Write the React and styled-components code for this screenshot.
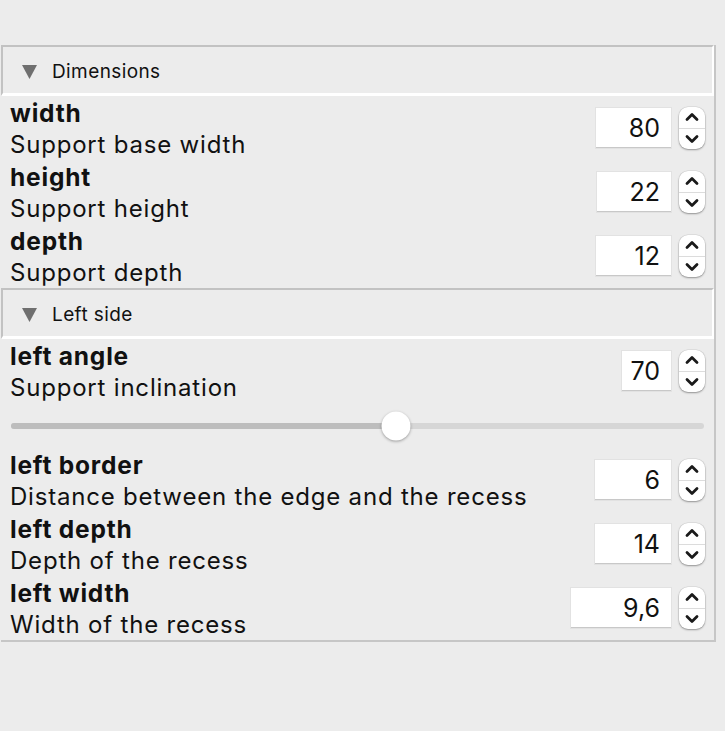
import styled, { createGlobalStyle } from 'styled-components';

const GlobalStyle = createGlobalStyle`
  html, body {
    margin: 0;
    padding: 0;
    background: #ececec;
    font-family: Inter, "Liberation Sans", sans-serif;
    color: #111;
  }
`;

const sections = [
  {
    title: 'Dimensions',
    rows: [
      { name: 'width', desc: 'Support base width', value: '80', boxWidth: 75 },
      { name: 'height', desc: 'Support height', value: '22', boxWidth: 74 },
      { name: 'depth', desc: 'Support depth', value: '12', boxWidth: 75 },
    ],
  },
  {
    title: 'Left side',
    rows: [
      { name: 'left angle', desc: 'Support inclination', value: '70', boxWidth: 49, slider: 0.555 },
      { name: 'left border', desc: 'Distance between the edge and the recess', value: '6', boxWidth: 76 },
      { name: 'left depth', desc: 'Depth of the recess', value: '14', boxWidth: 76 },
      { name: 'left width', desc: 'Width of the recess', value: '9,6', boxWidth: 100 },
    ],
  },
];

const Triangle = () => (
  <TriangleIcon width="15" height="14" viewBox="0 0 15 14">
    <polygon points="0,0 15,0 7.5,14" fill="#6f6f6f" />
  </TriangleIcon>
);

const Stepper = () => (
  <StepperBox>
    <StepHalf>
      <svg width="14" height="10" viewBox="0 0 14 10">
        <polyline points="2,7.5 7,2.5 12,7.5" fill="none" stroke="#1a1a1a" strokeWidth="2.8" strokeLinecap="round" strokeLinejoin="round" />
      </svg>
    </StepHalf>
    <StepHalf $bottom>
      <svg width="14" height="10" viewBox="0 0 14 10">
        <polyline points="2,2.5 7,7.5 12,2.5" fill="none" stroke="#1a1a1a" strokeWidth="2.8" strokeLinecap="round" strokeLinejoin="round" />
      </svg>
    </StepHalf>
  </StepperBox>
);

const App = () => {
  return (
    <>
      <GlobalStyle />
      <Page>
        <Panel>
          {sections.map((s) => (
            <section key={s.title}>
              <Header>
                <Triangle />
                <HeaderTitle>{s.title}</HeaderTitle>
              </Header>
              {s.rows.map((r) => (
                <div key={r.name}>
                  <Row>
                    <Labels>
                      <Name>{r.name}</Name>
                      <Desc>{r.desc}</Desc>
                    </Labels>
                    <Control>
                      <NumberBox $w={r.boxWidth}>{r.value}</NumberBox>
                      <Stepper />
                    </Control>
                  </Row>
                  {r.slider !== undefined && (
                    <SliderRow>
                      <Track>
                        <Fill style={{ width: `${r.slider * 100}%` }} />
                        <Thumb style={{ left: `${r.slider * 100}%` }} />
                      </Track>
                    </SliderRow>
                  )}
                </div>
              ))}
            </section>
          ))}
        </Panel>
      </Page>
    </>
  );
};

export default App;

const Page = styled.div`
  width: 725px;
  height: 731px;
  padding-top: 45px;
  box-sizing: border-box;
`;

const Panel = styled.div`
  margin-left: 1px;
  width: 715px;
  box-sizing: border-box;
  border-right: 2px solid #c6c6c6;
  border-bottom: 2px solid #c6c6c6;
`;

const Header = styled.div`
  height: 51px;
  box-sizing: border-box;
  display: flex;
  align-items: center;
  gap: 15px;
  padding: 2px 0 0 19px;
  border-top: 2px solid #c2c2c2;
  border-left: 2px solid #c2c2c2;
  border-right: 2px solid #ffffff;
  border-bottom: 3px solid #ffffff;
`;

const TriangleIcon = styled.svg`
  margin-top: 2px;
`;

const HeaderTitle = styled.span`
  font-size: 19px;
  letter-spacing: 0.4px;
  color: #111;
`;

const Row = styled.div`
  display: flex;
  justify-content: space-between;
  align-items: center;
  padding: 0 9px 0 9px;
  height: 64px;
`;

const Labels = styled.div`
  display: flex;
  flex-direction: column;
  padding-top: 2px;
`;

const Name = styled.span`
  font-weight: 700;
  font-size: 24.5px;
  letter-spacing: 0.8px;
  line-height: 32px;
`;

const Desc = styled.span`
  font-size: 24px;
  letter-spacing: 0.8px;
  line-height: 32px;
`;

const Control = styled.div`
  display: flex;
  align-items: center;
  gap: 8px;
`;

const NumberBox = styled.div`
  width: ${(p) => p.$w}px;
  height: 40px;
  box-sizing: border-box;
  background: #fff;
  border-bottom: 1px solid #c8c8c8;
  box-shadow: 0 0 0 1px #e2e2e2;
  display: flex;
  align-items: center;
  justify-content: flex-end;
  padding-right: 11px;
  font-size: 25px;
`;

const StepperBox = styled.div`
  width: 26px;
  height: 42px;
  border-radius: 9px;
  background: #fff;
  box-shadow: 0 1px 2px rgba(0, 0, 0, 0.35), 0 0 0 0.5px rgba(0, 0, 0, 0.1);
  display: flex;
  flex-direction: column;
  overflow: hidden;
`;

const StepHalf = styled.div`
  flex: 1;
  display: flex;
  align-items: center;
  justify-content: center;
  border-top: ${(p) => (p.$bottom ? '1px solid #dcdcdc' : 'none')};
`;

const SliderRow = styled.div`
  height: 45px;
  padding: 0 10px;
  display: flex;
  align-items: center;
`;

const Track = styled.div`
  position: relative;
  flex: 1;
  height: 6px;
  border-radius: 3px;
  background: #d6d6d6;
`;

const Fill = styled.div`
  height: 100%;
  border-radius: 3px;
  background: #bdbdbd;
`;

const Thumb = styled.div`
  position: absolute;
  top: 50%;
  width: 29px;
  height: 29px;
  border-radius: 50%;
  background: #fff;
  box-shadow: 0 1px 3px rgba(0, 0, 0, 0.35);
  transform: translate(-50%, -50%);
`;
